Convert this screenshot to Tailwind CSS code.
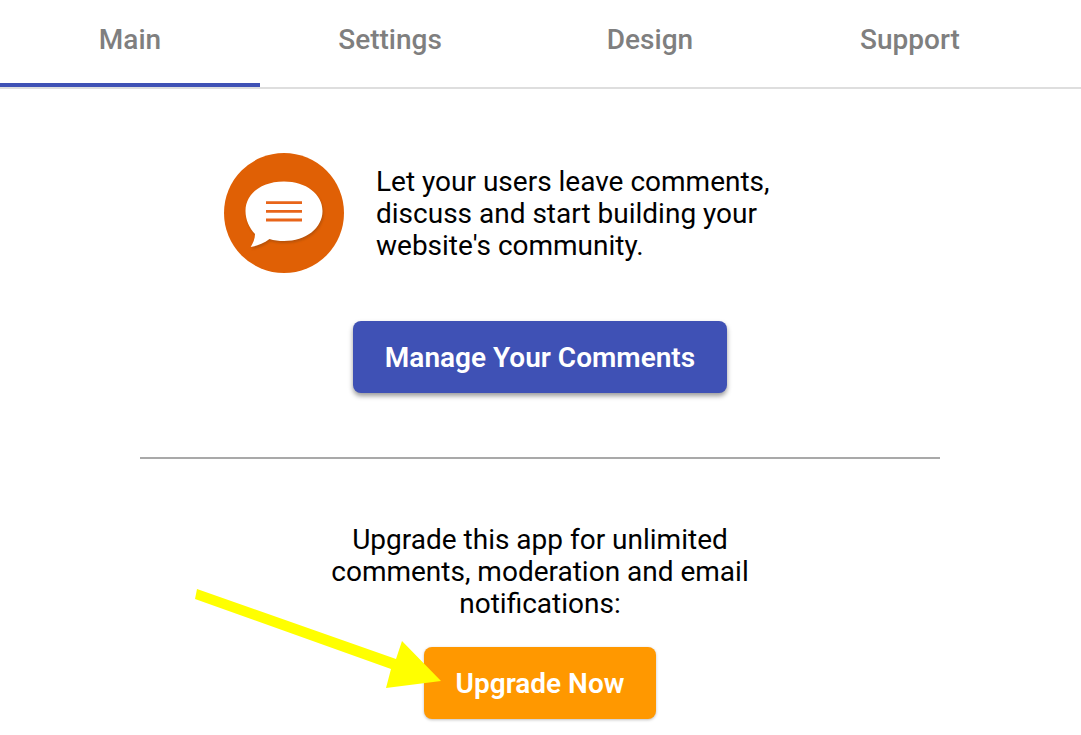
<!DOCTYPE html>
<html lang="en">
<head>
    <meta charset="UTF-8">
    <title>Comments</title>
    <script src="https://cdn.jsdelivr.net/npm/@tailwindcss/browser@4"></script>
</head>
<body class="relative h-[735px] overflow-hidden bg-white font-['Roboto',sans-serif] text-black">

    <!-- Tabs -->
    <div class="flex h-[89px] border-b-2 border-[#dedede]">
        <div class="flex h-[87px] w-[260px] items-start justify-center border-b-4 border-[#3f51b5] pt-[22px] text-[28px] leading-[36px] font-[460] text-[#7f7f7f]">Main</div>
        <div class="flex h-[87px] w-[260px] items-start justify-center pt-[22px] text-[28px] leading-[36px] font-[460] text-[#7f7f7f]">Settings</div>
        <div class="flex h-[87px] w-[260px] items-start justify-center pt-[22px] text-[28px] leading-[36px] font-[460] text-[#7f7f7f]">Design</div>
        <div class="flex h-[87px] w-[260px] items-start justify-center pt-[22px] text-[28px] leading-[36px] font-[460] text-[#7f7f7f]">Support</div>
    </div>

    <div class="w-[1080px]">
        <!-- Intro -->
        <div class="mt-[64px] flex items-center pl-[224px]">
            <svg class="h-[120px] w-[120px] shrink-0" viewBox="0 0 120 120">
                <defs>
                    <filter id="soft"><feGaussianBlur stdDeviation="0.4"/></filter>
                    <filter id="softer"><feGaussianBlur stdDeviation="1.2"/></filter>
                </defs>
                <circle cx="60" cy="60" r="60" fill="#e06005"/>
                <path d="M60 28.500C37 28.500 21.500 41 21.500 58C21.500 67 25.500 75 31 81C31 86 29 90 26.700 94C34 93 40 90 45.500 86C50 87.500 55 88 60 88C82 88 98.500 75 98.500 58C98.500 41 82 28.500 60 28.500Z" fill="#8a4310" opacity="0.45" filter="url(#softer)" transform="translate(1 2)"/>
                <path d="M60 28.500C37 28.500 21.500 41 21.500 58C21.500 67 25.500 75 31 81C31 86 29 90 26.700 94C34 93 40 90 45.500 86C50 87.500 55 88 60 88C82 88 98.500 75 98.500 58C98.500 41 82 28.500 60 28.500Z" fill="#fff" filter="url(#soft)"/>
                <path d="M42 49.700H78M42 58.300H78M42 67H78" stroke="#e8651a" stroke-width="2.800" fill="none"/>
            </svg>
            <p class="ml-[32px] w-[420px] pt-[1px] text-[28px] leading-[32px]">Let your users leave comments, discuss and start building your website's community.</p>
        </div>

        <!-- Manage button -->
        <div class="mt-[48px] flex justify-center">
            <button class="flex h-[72px] w-[374px] items-center justify-center rounded-[8px] bg-[#3f51b5] pt-[2px] text-[28px] font-semibold text-white shadow-[0_3px_5px_rgba(0,0,0,0.4)]">Manage Your Comments</button>
        </div>

        <hr class="mx-[140px] mt-[64px] w-[800px] border-t-2 border-[#a9a9a9]">

        <!-- Upgrade -->
        <p class="mx-auto mt-[65px] w-[440px] text-center text-[28px] leading-[32px]">Upgrade this app for unlimited comments, moderation and email notifications:</p>
        <div class="mt-[27px] flex justify-center">
            <button class="flex h-[72px] w-[232px] items-center justify-center rounded-[8px] bg-[#ff9800] pt-[2px] text-[28px] font-semibold text-white shadow-[0_1px_3px_rgba(0,0,0,0.25)]">Upgrade Now</button>
        </div>
    </div>

    <!-- Yellow annotation arrow -->
    <svg class="absolute top-0 left-0 h-[735px] w-[1081px]" viewBox="0 0 1081 735">
        <polygon points="197,589 396,659 402,641 441,681 386,688 391,669 195,599" fill="#ffff00"/>
    </svg>
</body>
</html>
